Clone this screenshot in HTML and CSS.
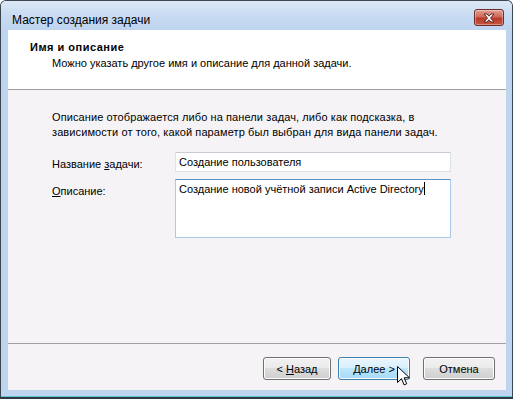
FILE: index.html
```html
<!DOCTYPE html>
<html lang="ru">
<head>
  <meta charset="UTF-8">
  <title>Мастер создания задачи</title>
  <link rel="stylesheet" href="styles.css">
</head>
<body>
  <div class="window">
    <div class="titlebar">
      <span class="title">Мастер создания задачи</span>
      <div class="close-btn">
        <svg width="16" height="10" viewBox="0 0 16 10">
          <path d="M3 1h3l2 2.2L10 1h3l-3.5 4L13 9h-3L8 6.8 6 9H3l3.5-4z" fill="#fff" stroke="#5a2a24" stroke-width="1"/>
        </svg>
      </div>
    </div>

    <div class="client">
      <div class="header">
        <h1>Имя и описание</h1>
        <p>Можно указать другое имя и описание для данной задачи.</p>
      </div>

      <div class="page">
        <p class="intro">Описание отображается либо на панели задач, либо как подсказка, в<br>зависимости от того, какой параметр был выбран для вида панели задач.</p>
        <div class="form">
          <label class="label">Название <u>з</u>адачи:</label>
          <div class="field">Создание пользователя</div>
          <label class="label"><u>О</u>писание:</label>
          <div class="field field-multi focused">Создание новой учётной записи Active Directory<span class="caret"></span></div>
        </div>
      </div>

      <div class="footer">
        <button class="btn btn-back">&lt; <u>Н</u>азад</button>
        <button class="btn btn-next"><u>Д</u>алее &gt;</button>
        <button class="btn btn-cancel">Отмена</button>
        <svg class="pointer" width="13" height="21" viewBox="0 0 13 21">
          <path d="M0.5 0.5v16l4-3.8 2.6 6.2 2.6-1.1-2.6-6h5.4z" fill="#fff" stroke="#000" stroke-width="1"/>
        </svg>
      </div>
    </div>
  </div>
</body>
</html>
```

FILE: styles.css
```css
:root {
  --frame: #bfd4ef;
  --face: #f6f3f6;
  --rule: #a0a0a0;
  --text: #000;
}

* {
  margin: 0;
  padding: 0;
  box-sizing: border-box;
}

body {
  font-family: "Liberation Sans", Arial, sans-serif;
  font-size: 11px;
  color: var(--text);
  background: #fff;
}

.window {
  width: 513px;
  height: 399px;
  border: 1px solid #3c4650;
  border-radius: 6px 6px 0 0;
  background: var(--frame);
  padding: 0 6px 7px 7px;
  display: flex;
  flex-direction: column;
  border-bottom: 2px solid #2b3a44;
  box-shadow: inset 0 -1px 0 #5fc6d8;
}

.titlebar {
  height: 29px;
  display: flex;
  align-items: flex-start;
  justify-content: space-between;
  margin: 0 -6px 0 -7px;
  padding: 0 8px 0 11px;
  border-radius: 5px 5px 0 0;
  background: linear-gradient(#dbe7f6, #c5d9f1 60%, #bfd4ef);
}

.title {
  font-size: 12px;
  line-height: 16px;
  margin-top: 11px;
  color: #000;
}

.close-btn {
  margin-top: 8px;
  width: 30px;
  height: 17px;
  border: 1px solid #6b2e28;
  border-radius: 3px;
  background: linear-gradient(#e3a096, #d0685a 45%, #b83c2a 55%, #c7563f);
  display: flex;
  align-items: center;
  justify-content: center;
  box-shadow: inset 0 0 0 1px rgba(255, 255, 255, 0.35);
}

.client {
  flex: 1;
  display: flex;
  flex-direction: column;
  background: var(--face);
}

.header {
  height: 60px;
  background: #fff;
  border-bottom: 1px solid var(--rule);
  padding: 10px 0 0 22px;
}

.header h1 {
  font-size: 11px;
  font-weight: bold;
  line-height: 14px;
  letter-spacing: 0.5px;
}

.header p {
  padding-left: 22px;
  line-height: 14px;
  margin-top: 2px;
}

.page {
  flex: 1;
  padding: 20px 0 0 44px;
  border-bottom: 1px solid var(--rule);
}

.intro {
  line-height: 15px;
  letter-spacing: 0.1px;
}

.form {
  margin-top: 12px;
  display: grid;
  grid-template-columns: 123px 276px;
  row-gap: 7px;
}

.label {
  padding-top: 5px;
  line-height: 14px;
}

.field {
  height: 20px;
  background: #fff;
  border: 1px solid #dde1e8;
  border-top-color: #c7cbd3;
  padding: 2px 3px;
  line-height: 14px;
  white-space: nowrap;
}

.field-multi {
  height: 59px;
}

.field.focused {
  border-color: #a9cbe9;
  border-top-color: #5593c9;
}

.caret {
  display: inline-block;
  width: 1px;
  height: 13px;
  background: #000;
  vertical-align: -2px;
}

.footer {
  height: 46px;
  display: flex;
  align-items: flex-start;
  justify-content: flex-end;
  padding: 13px 11px 0 0;
  position: relative;
}

.btn {
  font-family: inherit;
  font-size: 11px;
  height: 23px;
  width: 72px;
  border: 1px solid #707070;
  border-radius: 3px;
  background: linear-gradient(#f2f2f2, #ebebeb 45%, #dddddd 50%, #cfcfcf);
  box-shadow: inset 0 0 0 1px #fcfcfc;
  color: #000;
}

.btn-back {
  width: 68px;
}

.btn-next {
  margin-left: 7px;
  border-color: #3c7fb1;
  background: linear-gradient(#eaf6fd, #d9f0fc 45%, #bee6fd 50%, #a7d9f5);
}

.btn-cancel {
  margin-left: 13px;
}

.pointer {
  position: absolute;
  left: 389px;
  top: 22px;
}
```
